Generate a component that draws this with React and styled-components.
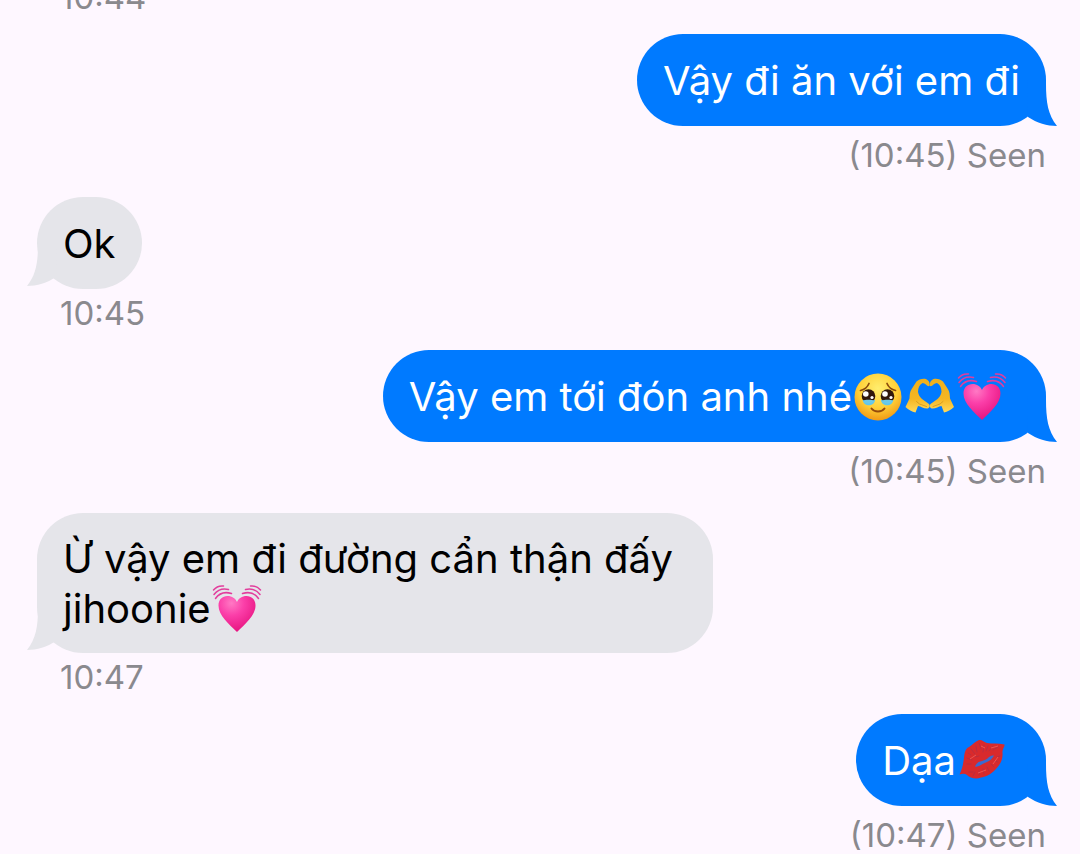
import styled, { createGlobalStyle } from 'styled-components';

const GlobalStyle = createGlobalStyle`
  * {
    box-sizing: border-box;
  }
  body {
    margin: 0;
    background: #fef7ff;
    font-family: Inter, 'Noto Sans', sans-serif;
  }
`

const Chat = styled.main`
  display: flex;
  flex-direction: column;
  justify-content: flex-end;
  height: 100vh;
  padding: 0 34px 2px 37px;
  overflow: hidden;
`

const Messages = styled.ol`
  display: flex;
  flex-direction: column;
  margin: 0;
  padding: 0;
  list-style: none;
`

const Message = styled.li`
  display: flex;
  flex-direction: column;
  align-items: ${({ $sent }) => ($sent ? 'flex-end' : 'flex-start')};
  padding-bottom: ${({ $sent }) => ($sent ? '25px' : '20px')};
  &:last-child {
    padding-bottom: 0;
  }
`

const Bubble = styled.div`
  position: relative;
  display: flex;
  align-items: center;
  min-height: 92px;
  max-width: 67%;
  padding: 21px ${({ $wide }) => ($wide ? '38px' : '26px')} 19px 26px;
  border-radius: 46px;
  background: ${({ $sent }) => ($sent ? '#007aff' : '#e5e5ea')};
  color: ${({ $sent }) => ($sent ? '#fff' : '#000')};
`

const Text = styled.p`
  margin: 0;
  font-size: 40px;
  line-height: 50px;
`

const Tail = styled.svg`
  position: absolute;
  width: 30px;
  height: 46px;
  ${({ $sent }) => ($sent
    ? 'right: -11px; bottom: 0; fill: #007aff;'
    : 'left: -10px; bottom: 3px; fill: #e5e5ea; transform: scaleX(-1);')}
`

const Caption = styled.div`
  margin-top: ${({ $sent }) => ($sent ? '12px' : '7px')};
  padding-left: ${({ $sent }) => ($sent ? '0' : '23px')};
  font-size: 33px;
  line-height: 34px;
  color: #8a898e;
`

const Icon = styled.svg`
  width: 50px;
  height: 50px;
  margin: -4px 1px;
  vertical-align: -7px;
`

const TearyFace = () => (
  <Icon viewBox="0 0 50 50" role="img" aria-label="face holding back tears">
    <defs>
      <radialGradient id="face" cx="0.5" cy="0.32" r="0.68">
        <stop offset="0" stopColor="#ffee6e" />
        <stop offset="0.6" stopColor="#ffd038" />
        <stop offset="1" stopColor="#f09a16" />
      </radialGradient>
    </defs>
    <circle cx="25" cy="25" r="23.5" fill="url(#face)" />
    <path d="M7.5 18.5C11.5 17.5 14.5 15 16 11.5M42.5 18.5C38.5 17.5 35.5 15 34 11.5" fill="none" stroke="#8a4a0c" strokeWidth="1.7" strokeLinecap="round" />
    <path d="M10 28C10 35 21.5 35 22 28ZM28 28C28.5 35 40 35 40 28Z" fill="#62c6ea" />
    <circle cx="15.5" cy="24" r="6.8" fill="#31180c" />
    <circle cx="34.5" cy="24" r="6.8" fill="#31180c" />
    <path d="M9.5 28.5C12 27.5 19 27.5 21.5 28.5C20 32.5 11 32.5 9.5 28.5ZM28.5 28.5C31 27.5 38 27.5 40.5 28.5C39 32.5 30 32.5 28.5 28.5Z" fill="#6cc9e8" />
    <circle cx="12.8" cy="22" r="2.8" fill="#fff" />
    <circle cx="19" cy="25.5" r="1.6" fill="#fff" />
    <circle cx="32" cy="22" r="2.8" fill="#fff" />
    <circle cx="38" cy="25.5" r="1.6" fill="#fff" />
    <path d="M18.5 36.5C21.5 40.5 28.5 40.5 31.5 36.5" fill="none" stroke="#944a0b" strokeWidth="2" strokeLinecap="round" />
  </Icon>
)

const hand = 'M0.5 35L4.5 26.5C4.8 23 4.5 20 7 16.5L11.5 9.5C14 7 20 5.5 22.5 8C24.5 9.5 25 12 24.5 14C22.5 15 20.5 11 17.5 11C14.5 12.5 13 16 13 20C13.5 23 15 25 17 27L24 32C25.5 34 24.5 36.5 22 36.5C18.5 36.5 16 34.5 13 34L10.5 40.5C7 39.5 3.5 38 0.5 35Z'

const HeartHands = () => (
  <Icon viewBox="0 0 50 50" role="img" aria-label="heart hands">
    <defs>
      <linearGradient id="hand" x1="0" y1="0" x2="0" y2="1">
        <stop offset="0" stopColor="#eeb01c" />
        <stop offset="0.6" stopColor="#f6b622" />
        <stop offset="1" stopColor="#ffda5c" />
      </linearGradient>
    </defs>
    <g id="half">
      <path d={hand} fill="url(#hand)" />
      <path d="M11.5 29.5L14.5 32L21.5 34.5" fill="none" stroke="#d0931a" strokeWidth="0.8" strokeLinecap="round" />
    </g>
    <use href="#half" transform="translate(49.5 0) scale(-1 1)" />
  </Icon>
)

const BeatingHeart = () => (
  <Icon viewBox="0 0 50 50" role="img" aria-label="beating heart">
    <defs>
      <radialGradient id="heart" cx="0.35" cy="0.2" r="0.85">
        <stop offset="0" stopColor="#ff79c4" />
        <stop offset="0.4" stopColor="#fb3fa9" />
        <stop offset="1" stopColor="#e5107c" />
      </radialGradient>
    </defs>
    <path d="M25 48C17 40 6.5 31.5 6.5 21.5C6.5 15.5 10.5 12 15.5 12C20 12 23.5 14.5 25 18C26.5 14.5 30 12 34.5 12C39.5 12 43.5 15.5 43.5 21.5C43.5 31.5 33 40 25 48Z" fill="url(#heart)" />
    <g fill="none" stroke="#e23d9c" strokeWidth="1.5" strokeLinecap="round">
      <path d="M1.5 6C4 3 7.5 1.5 11.5 2M2 10.5C5.5 6 10.5 4 16.5 5.5M3.5 14.5C7 9.5 13 7.5 19.5 9.5" />
      <path d="M48.5 6C46 3 42.5 1.5 38.5 2M48 10.5C44.5 6 39.5 4 33.5 5.5M46.5 14.5C43 9.5 37 7.5 30.5 9.5" />
    </g>
  </Icon>
)

const KissMark = () => (
  <Icon viewBox="-2 1 50 50" role="img" aria-label="kiss mark">
    <path d="M0.5 39.5C3.5 34 4 29 5 23C5.5 18 6 14 10 12C13.5 10 16 6.5 20 5C23 4.5 25 7 28 8C33 9 39 8 45.5 9.5C46 12 43 14 43.5 18C44 25 41 30 36 35C31 40 26 42 22 42.5C17 44.5 11 43 8 40C6 38.5 4 38.5 0.5 39.5Z" fill="#d92a2c" />
    <path d="M16 31.5C17 29 19 26.5 23 26C26 25 28 24.5 30 22C32 20.5 33 20.5 35 20.5C34 22.5 32 25 29 26.5C26 27.5 23 29.5 21 30.5C19 31.5 18 32 16 31.5Z" fill="#3a6bd0" />
    <g fill="none" stroke="#b02f45" strokeWidth="0.8" strokeLinecap="round">
      <path d="M9 18L12 20M8 23L13 25M12 14L16 19M17 11L18 17M20 8L22 14M25 10L24 17M29 11L27 16M34 11L30 16M39 12L34 15M8 29L12 29M16 22L20 21" />
      <path d="M10 37L14 37M14 41L16 37M20 40L20 36M25 39L24 34M30 36L28 32M35 32L32 29M39 27L36 26M41 21L38 22" />
    </g>
    <path d="M11 24L17 20M22 11L26 13M32 13L39 11M19 38L27 35M34 29L39 22" fill="none" stroke="#ec5552" strokeWidth="1" />
  </Icon>
)

const messages = [
  { id: 1, time: '10:44', text: 'Ok' },
  { id: 2, sent: true, time: '10:45', text: 'Vậy đi ăn với em đi' },
  { id: 3, time: '10:45', text: 'Ok' },
  { id: 4, sent: true, time: '10:45', text: 'Vậy em tới đón anh nhé', icons: [TearyFace, HeartHands, BeatingHeart] },
  { id: 5, time: '10:47', text: 'Ừ vậy em đi đường cẩn thận đấy jihoonie', icons: [BeatingHeart] },
  { id: 6, sent: true, time: '10:47', text: 'Dạa', icons: [KissMark] },
]

const App = () => {
  return (
    <>
      <GlobalStyle />
      <Chat>
        <Messages>
          {messages.map(({ id, sent, time, text, icons = [] }) => (
            <Message key={id} $sent={sent}>
              <Bubble $sent={sent} $wide={icons.length > 0}>
                <Text>
                  {text}
                  {icons.map((Emoji, index) => <Emoji key={index} />)}
                </Text>
                <Tail $sent={sent} viewBox="0 0 30 46" aria-hidden="true">
                  <path d="M0 0H19V4C19 22 21 35 30 46C20 46 10 43 1 37Z" />
                </Tail>
              </Bubble>
              <Caption $sent={sent}>
                {sent ? <>(<time>{time}</time>) Seen</> : <time>{time}</time>}
              </Caption>
            </Message>
          ))}
        </Messages>
      </Chat>
    </>
  )
}

export default App;
